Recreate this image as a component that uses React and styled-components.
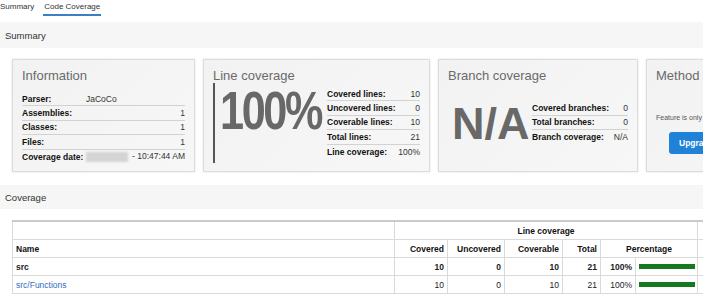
import styled, { createGlobalStyle } from 'styled-components';

const GlobalStyle = createGlobalStyle`
    html, body {
        margin: 0;
        padding: 0;
        overflow: hidden;
        background: #fff;
    }
    body {
        font-family: "Liberation Sans", Arial, sans-serif;
        color: #222;
    }
`

const Page = styled.div`
    width: 703px;
    overflow: hidden;
`

const Tabs = styled.nav`
    display: flex;
    gap: 9px;
    height: 22px;
`

const Tab = styled.div`
    font-size: 8px;
    line-height: 11px;
    height: 13px;
    padding-top: 1px;
    color: #333;
    border-bottom: 2px solid ${props => props.active ? '#3d7fc6' : 'transparent'};
    padding-left: ${props => props.active ? '1px' : '0'};
    padding-right: ${props => props.active ? '1px' : '0'};
`

const SectionHeader = styled.div`
    background: #f6f6f6;
    height: ${props => props.h || 26}px;
    display: flex;
    align-items: center;
    padding-left: 5px;
    font-size: 9.5px;
    color: #333;
`

const CardRow = styled.div`
    display: flex;
    gap: 8px;
    padding: 11px 0 13px 12px;
`

const Card = styled.div`
    flex-shrink: 0;
    box-sizing: border-box;
    width: ${props => props.w}px;
    height: 113px;
    padding: 8px 9px 8px 9px;
    border: 1px solid #dcdcdc;
    box-shadow: 0 0 2px rgba(0,0,0,0.12);
    background: linear-gradient(135deg, #f2f2f2 0%, #f7f7f7 100%);
    display: flex;
    flex-direction: column;
`

const CardTitle = styled.div`
    font-size: 13px;
    line-height: 15px;
    height: 15px;
    color: #6a6a6a;
    white-space: nowrap;
`

const InfoTable = styled.div`
    margin-top: 9px;
`

const Row = styled.div`
    display: flex;
    align-items: center;
    justify-content: space-between;
    box-sizing: border-box;
    height: 14.4px;
    font-size: 8.5px;
    white-space: nowrap;
    border-bottom: 1px solid #d2d2d2;
    &:last-child {
        border-bottom: none;
    }
`

const Label = styled.span`
    font-weight: bold;
    color: #111;
    min-width: ${props => props.w || 0}px;
`

const Value = styled.span`
    flex: 1;
    text-align: ${props => props.left ? 'left' : 'right'};
    color: #333;
`

const Blurred = styled.span`
    display: inline-block;
    width: 42px;
    height: 10px;
    vertical-align: middle;
    background: #d4d4d4;
    filter: blur(1px);
    margin-right: 2px;
`

const CardBody = styled.div`
    display: flex;
    align-items: ${props => props.center ? 'center' : 'flex-start'};
    height: 80px;
`

const Bar = styled.div`
    align-self: stretch;
    flex-shrink: 0;
    width: 0;
    border-left: 2px solid #555;
`

const Big = styled.div`
    flex-shrink: 0;
    width: ${props => props.w}px;
    font-size: ${props => props.size}px;
    line-height: 1;
    font-weight: bold;
    color: #686868;
    letter-spacing: ${props => props.spacing || 0}px;
    margin-left: ${props => props.ml || 0}px;
    white-space: nowrap;
    transform: scaleX(${props => props.sx || 1});
    transform-origin: left center;
`

const Stats = styled.div`
    margin-left: auto;
    align-self: center;
    flex-shrink: 0;
    width: ${props => props.w}px;
`

const Notice = styled.div`
    margin-top: 29px;
    font-size: 7px;
    line-height: 11px;
    color: #555;
    white-space: nowrap;
`

const UpgradeButton = styled.button`
    margin-top: 9px;
    margin-left: 13px;
    height: 22px;
    width: 120px;
    border: none;
    border-radius: 3px;
    background: #1f82d6;
    color: #fff;
    font-family: inherit;
    font-weight: bold;
    font-size: 8.5px;
    text-align: left;
    padding-left: 10px;
    white-space: nowrap;
`

const TableWrap = styled.div`
    padding: 11px 0 0 12px;
`

const Table = styled.table`
    table-layout: fixed;
    border-collapse: collapse;
    width: 885px;
    font-size: 8.5px;
    border-top: 2px solid #cacaca;
`

const Cell = styled.td`
    height: 17px;
    padding: 0 3px;
    border: 1px solid #dadada;
    text-align: ${props => props.align || 'right'};
    font-weight: ${props => props.bold ? 'bold' : 'normal'};
    color: #222;
    white-space: nowrap;
    overflow: hidden;
`

const HeadCell = styled(Cell).attrs({ as: 'th' })`
    font-weight: bold;
    color: #111;
`

const NameLink = styled.a`
    color: #2f6fc0;
    text-decoration: none;
`

const CoverageBar = styled.div`
    width: 56px;
    height: 5px;
    background: #157a1f;
`

const infoRows = [
    ['Assemblies:', '1'],
    ['Classes:', '1'],
    ['Files:', '1'],
]

const lineRows = [
    ['Covered lines:', '10'],
    ['Uncovered lines:', '0'],
    ['Coverable lines:', '10'],
    ['Total lines:', '21'],
    ['Line coverage:', '100%'],
]

const branchRows = [
    ['Covered branches:', '0'],
    ['Total branches:', '0'],
    ['Branch coverage:', 'N/A'],
]

const coverageRows = [
    { name: 'src', covered: 10, uncovered: 0, coverable: 10, total: 21, pct: '100%', bold: true },
    { name: 'src/Functions', covered: 10, uncovered: 0, coverable: 10, total: 21, pct: '100%', link: true },
]

const StatList = ({ rows }) => rows.map(([label, value]) => (
    <Row key={label}>
        <Label>{label}</Label>
        <Value>{value}</Value>
    </Row>
))

export default function App() {
    return (
        <Page>
            <GlobalStyle />
            <Tabs>
                <Tab>Summary</Tab>
                <Tab active>Code Coverage</Tab>
            </Tabs>

            <SectionHeader>Summary</SectionHeader>
            <CardRow>
                <Card w={183}>
                    <CardTitle>Information</CardTitle>
                    <InfoTable>
                        <Row>
                            <Label w={64}>Parser:</Label>
                            <Value left>JaCoCo</Value>
                        </Row>
                        <StatList rows={infoRows} />
                        <Row>
                            <Label>Coverage date:</Label>
                            <Value><Blurred /> - 10:47:44 AM</Value>
                        </Row>
                    </InfoTable>
                </Card>

                <Card w={227}>
                    <CardTitle>Line coverage</CardTitle>
                    <CardBody>
                        <Bar />
                        <Big w={100} size={54} spacing={-3} sx={0.8} ml={5}>100%</Big>
                        <Stats w={93}>
                            <StatList rows={lineRows} />
                        </Stats>
                    </CardBody>
                </Card>

                <Card w={200}>
                    <CardTitle>Branch coverage</CardTitle>
                    <CardBody center>
                        <Big w={78} size={45} ml={4}>N/A</Big>
                        <Stats w={96}>
                            <StatList rows={branchRows} />
                        </Stats>
                    </CardBody>
                </Card>

                <Card w={200}>
                    <CardTitle>Method coverage</CardTitle>
                    <Notice>Feature is only available for sponsors</Notice>
                    <UpgradeButton>Upgrade to PRO version</UpgradeButton>
                </Card>
            </CardRow>

            <SectionHeader h={24}>Coverage</SectionHeader>
            <TableWrap>
                <Table>
                    <colgroup>
                        <col style={{ width: 382 }} />
                        <col style={{ width: 53 }} />
                        <col style={{ width: 57 }} />
                        <col style={{ width: 58 }} />
                        <col style={{ width: 38 }} />
                        <col style={{ width: 35 }} />
                        <col style={{ width: 62 }} />
                        <col style={{ width: 200 }} />
                    </colgroup>
                    <thead>
                        <tr>
                            <HeadCell />
                            <HeadCell colSpan={6} align="center">Line coverage</HeadCell>
                            <HeadCell align="center">Branch coverage</HeadCell>
                        </tr>
                        <tr>
                            <HeadCell align="left">Name</HeadCell>
                            <HeadCell>Covered</HeadCell>
                            <HeadCell>Uncovered</HeadCell>
                            <HeadCell>Coverable</HeadCell>
                            <HeadCell>Total</HeadCell>
                            <HeadCell colSpan={2} align="center">Percentage</HeadCell>
                            <HeadCell align="center">Covered</HeadCell>
                        </tr>
                    </thead>
                    <tbody>
                        {coverageRows.map(r => (
                            <tr key={r.name}>
                                <Cell align="left" bold={r.bold}>
                                    {r.link ? <NameLink href="#">{r.name}</NameLink> : r.name}
                                </Cell>
                                <Cell bold={r.bold}>{r.covered}</Cell>
                                <Cell bold={r.bold}>{r.uncovered}</Cell>
                                <Cell bold={r.bold}>{r.coverable}</Cell>
                                <Cell bold={r.bold}>{r.total}</Cell>
                                <Cell bold={r.bold}>{r.pct}</Cell>
                                <Cell align="left"><CoverageBar /></Cell>
                                <Cell />
                            </tr>
                        ))}
                    </tbody>
                </Table>
            </TableWrap>
        </Page>
    );
}
